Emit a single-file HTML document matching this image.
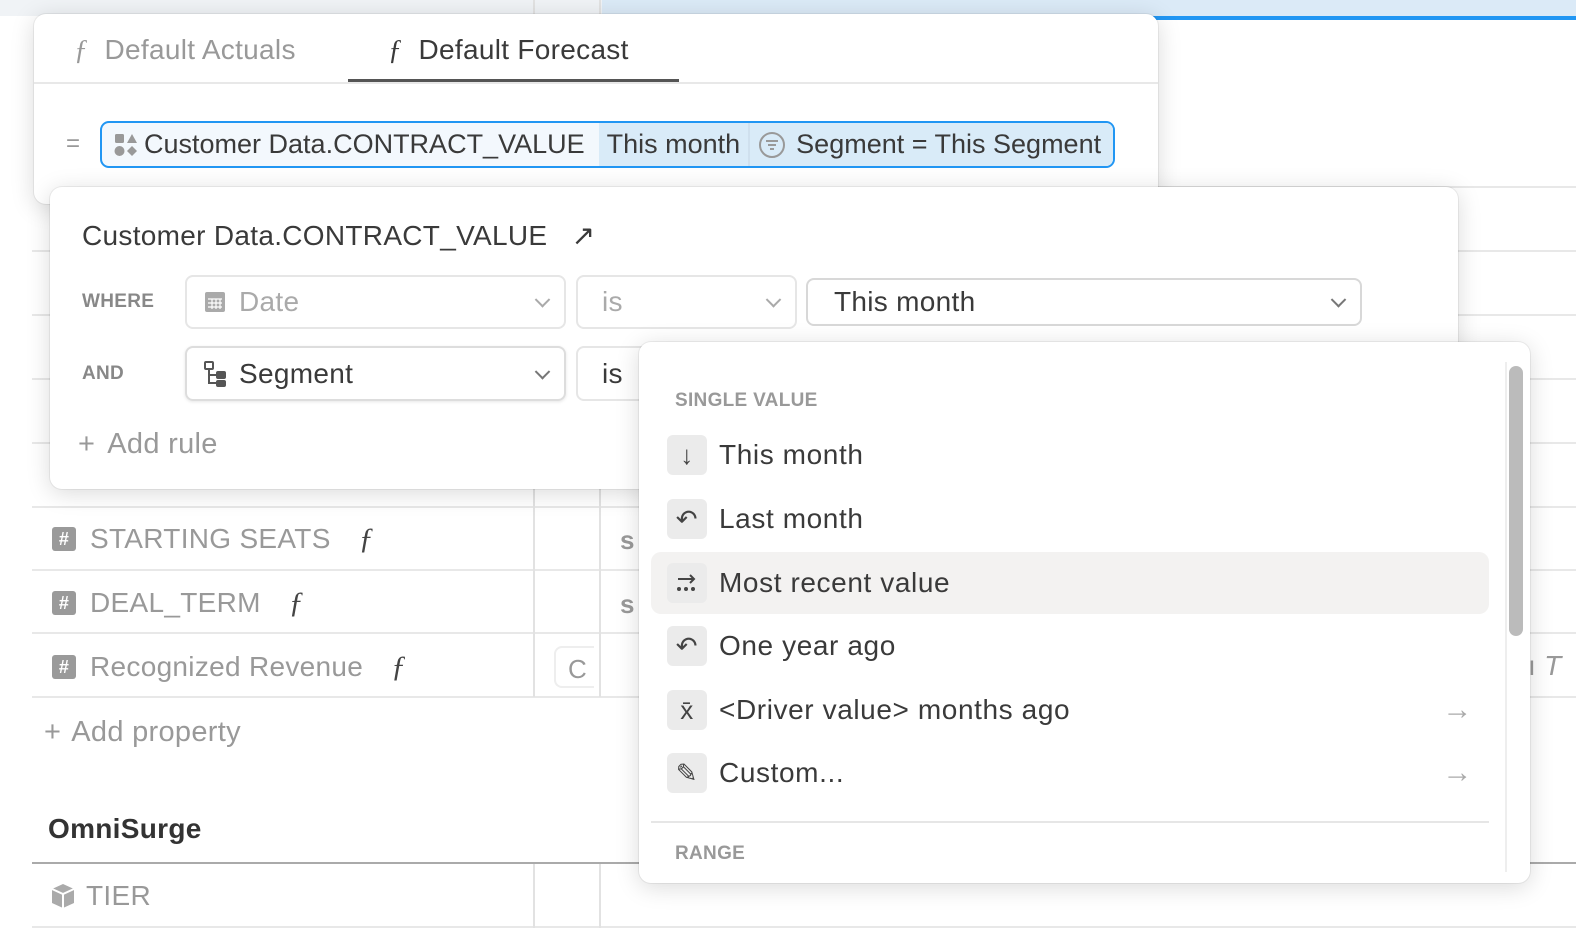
<!DOCTYPE html>
<html><head><meta charset="utf-8"><style>
*{box-sizing:border-box;margin:0;padding:0}
body{width:1576px;height:934px;overflow:hidden;background:#fff;font-family:"Liberation Sans",sans-serif;color:#444;position:relative;letter-spacing:.3px}
.abs{position:absolute}
.hl{position:absolute;height:2px;background:#e8e8e8}
.vl{position:absolute;width:2px;background:#e2e2e2}
.row{position:absolute;left:52px;font-size:28px;color:#999;display:flex;align-items:center}
.hash{width:24px;height:24px;background:#9a9a9a;border-radius:3px;color:#fff;font-size:18px;font-weight:bold;display:flex;align-items:center;justify-content:center;margin-right:14px}
.f{font-style:italic;color:#444;font-family:"Liberation Serif",serif;margin-left:28px;font-size:30px}
.card{position:absolute;background:#fff;border-radius:12px;box-shadow:0 4px 24px rgba(0,0,0,.15),0 0 0 1px rgba(0,0,0,.06)}
.sel{position:absolute;border:2px solid #e6e6e6;border-radius:8px;font-size:28px;display:flex;align-items:center;padding-left:16px}
.chev{position:absolute;right:16px;top:50%;width:11px;height:11px;border-right:2px solid #777;border-bottom:2px solid #777;transform:translateY(-70%) rotate(45deg)}
.item{position:absolute;left:12px;width:838px;height:62px;display:flex;align-items:center;font-size:28px;color:#3a3a3a;border-radius:10px;letter-spacing:.6px}
.ic{width:40px;height:40px;background:#ebebeb;border-radius:6px;margin:0 12px 0 16px;display:flex;align-items:center;justify-content:center;font-size:26px;color:#444}
.arr{position:absolute;right:16px;color:#aaa;font-size:30px}
</style></head><body>
<div class="abs" style="left:0;top:0;width:1576px;height:16px;background:#f0f3f6"></div>
<div class="abs" style="left:602px;top:0;width:974px;height:20px;background:#dbeaf7;border-bottom:4px solid #2196f3"></div>
<div class="hl" style="left:1150px;top:186px;width:426px"></div>
<div class="hl" style="left:32px;top:250px;width:1544px"></div>
<div class="hl" style="left:32px;top:314px;width:1544px"></div>
<div class="hl" style="left:32px;top:378px;width:1544px"></div>
<div class="hl" style="left:32px;top:442px;width:1544px"></div>
<div class="hl" style="left:32px;top:506px;width:1544px"></div>
<div class="hl" style="left:32px;top:569px;width:1544px"></div>
<div class="hl" style="left:32px;top:632px;width:1544px"></div>
<div class="hl" style="left:32px;top:696px;width:1544px"></div>
<div class="hl" style="left:32px;top:862px;width:1544px;background:#aaa"></div>
<div class="hl" style="left:32px;top:926px;width:1544px"></div>
<div class="vl" style="left:533px;top:0;height:697px"></div>
<div class="vl" style="left:599px;top:0;height:697px"></div>
<div class="vl" style="left:533px;top:864px;height:64px"></div>
<div class="vl" style="left:599px;top:864px;height:64px"></div>
<div class="row" style="top:522px"><span class="hash">#</span>STARTING SEATS<span class="f">ƒ</span></div>
<div class="row" style="top:586px"><span class="hash">#</span>DEAL_TERM<span class="f">ƒ</span></div>
<div class="row" style="top:650px"><span class="hash">#</span>Recognized Revenue<span class="f">ƒ</span></div>
<div class="abs" style="left:620px;top:525px;font-size:26px;color:#999;font-weight:bold">s</div>
<div class="abs" style="left:620px;top:589px;font-size:26px;color:#999;font-weight:bold">s</div>
<div class="abs" style="left:554px;top:646px;width:40px;height:42px;border:2px solid #eee;border-right:none;border-radius:8px 0 0 8px;font-size:26px;color:#999;padding:6px 12px">C</div>
<div class="abs" style="left:1528px;top:650px;font-size:28px;color:#999">ı <i>T</i></div>
<div class="abs" style="left:44px;top:716px;font-size:29px;color:#999"><span style="margin-right:10px">+</span>Add property</div>
<div class="abs" style="left:48px;top:813px;font-size:28px;color:#333;font-weight:bold">OmniSurge</div>
<div class="abs" style="left:50px;top:880px;font-size:28px;color:#999;display:flex;align-items:center"><svg width="26" height="28" viewBox="0 0 26 28" style="margin-right:10px"><path d="M13 2l11 5v14l-11 5-11-5V7z" fill="#aaa"/><path d="M2 7l11 5 11-5M13 12v14" stroke="#fff" stroke-width="2" fill="none"/></svg>TIER</div>

<div class="card" style="left:34px;top:14px;width:1124px;height:190px">
 <div class="abs" style="left:40px;top:20px;font-size:28px;color:#999"><i style="font-family:'Liberation Serif',serif">ƒ</i>&nbsp; Default Actuals</div>
 <div class="abs" style="left:354px;top:20px;font-size:28px;color:#3a3a3a"><i style="font-family:'Liberation Serif',serif">ƒ</i>&nbsp; Default Forecast</div>
 <div class="abs" style="left:314px;top:65px;width:331px;height:4px;background:#555"></div>
 <div class="abs" style="left:0;top:68px;width:1124px;height:2px;background:#e8e8e8"></div>
 <div class="abs" style="left:32px;top:116px;font-size:24px;color:#999">=</div>
 <div class="abs" style="left:66px;top:107px;width:1015px;height:47px;border:2px solid #2196f3;border-radius:9px;background:#f3f8fd;overflow:hidden;display:flex;align-items:center;font-size:27px;color:#3a3a3a;letter-spacing:0;white-space:nowrap">
  <span style="padding-left:12px;display:inline-flex;align-items:center">
   <svg width="24" height="24" viewBox="0 0 24 24"><rect x="1" y="1" width="9" height="9" rx="1.5" fill="#999"/><path d="M18 1l5 9h-10z" fill="#999"/><circle cx="5.5" cy="18" r="5" fill="#999"/><path d="M18 13l5 5-5 5-5-5z" fill="#999"/></svg>
   <span style="margin-left:6px">Customer Data.CONTRACT_VALUE</span></span>
  <span style="margin-left:14px;background:#d9ebf8;height:100%;display:inline-flex;align-items:center;padding:0 8px;border-right:2px solid #cfe0ee">This month</span>
  <span style="background:#d9ebf8;height:100%;flex:1;display:inline-flex;align-items:center;padding-left:8px">
   <svg width="28" height="28" viewBox="0 0 28 28"><circle cx="14" cy="14" r="12" fill="none" stroke="#999" stroke-width="2"/><path d="M8 10h12M10 14h8M12 18h4" stroke="#999" stroke-width="2"/></svg>
   <span style="margin-left:10px">Segment = This Segment</span></span>
 </div>
</div>

<div class="card" style="left:50px;top:187px;width:1408px;height:302px">
 <div class="abs" style="left:32px;top:32px;font-size:28px;color:#3a3a3a">Customer Data.CONTRACT_VALUE &nbsp; ↗</div>
 <div class="abs" style="left:32px;top:104px;font-size:19px;font-weight:bold;color:#888">WHERE</div>
 <div class="abs" style="left:32px;top:176px;font-size:19px;font-weight:bold;color:#888">AND</div>
 <div class="sel" style="left:135px;top:88px;width:381px;height:54px;color:#aaa"><svg width="24" height="24" viewBox="0 0 24 24" style="margin-right:12px"><rect x="2" y="2" width="20" height="20" rx="2" fill="#aaa"/><path d="M5 9h14M5 13h14M5 17h14M9 9v10M13 9v10M17 9v10" stroke="#fff" stroke-width="1.2"/></svg>Date<span class="chev" style="border-color:#aaa"></span></div>
 <div class="sel" style="left:526px;top:88px;width:221px;height:54px;color:#aaa;padding-left:24px">is<span class="chev" style="border-color:#aaa"></span></div>
 <div class="sel" style="left:756px;top:91px;width:556px;height:48px;color:#3a3a3a;border-color:#d8d8d8;padding-left:26px">This month<span class="chev"></span></div>
 <div class="sel" style="left:135px;top:159px;width:381px;height:55px;color:#3a3a3a;border-color:#ddd;box-shadow:0 1px 3px rgba(0,0,0,.1)"><svg width="26" height="28" viewBox="0 0 26 28" style="margin-right:10px"><rect x="2" y="2" width="8" height="7" rx="1" fill="none" stroke="#555" stroke-width="2"/><path d="M6 9v14h8M6 15h8" stroke="#555" stroke-width="2" fill="none"/><rect x="13" y="11" width="10" height="8" rx="2" fill="#555"/><rect x="13" y="20" width="10" height="7" rx="2" fill="#555"/></svg>Segment<span class="chev"></span></div>
 <div class="sel" style="left:526px;top:159px;width:221px;height:55px;color:#3a3a3a;padding-left:24px">is</div>
 <div class="abs" style="left:28px;top:241px;font-size:29px;color:#999"><span style="margin-right:12px">+</span>Add rule</div>
</div>

<div class="card" style="left:639px;top:342px;width:891px;height:541px;overflow:hidden">
 <div class="abs" style="left:36px;top:48px;font-size:19px;font-weight:bold;color:#999">SINGLE VALUE</div>
 <div class="item" style="top:82px"><span class="ic">↓</span>This month</div>
 <div class="item" style="top:146px"><span class="ic">↶</span>Last month</div>
 <div class="item" style="top:210px;background:#f3f2f1"><span class="ic"><svg width="24" height="22" viewBox="0 0 24 22"><path d="M3 7h16M15 3l4 4-4 4" stroke="#444" stroke-width="2" fill="none"/><circle cx="4" cy="17" r="2" fill="#444"/><circle cx="11" cy="17" r="2" fill="#444"/><circle cx="18" cy="17" r="2" fill="#444"/></svg></span>Most recent value</div>
 <div class="item" style="top:273px"><span class="ic">↶</span>One year ago</div>
 <div class="item" style="top:337px"><span class="ic" style="font-size:26px">x̄</span>&lt;Driver value&gt; months ago<span class="arr">→</span></div>
 <div class="item" style="top:400px"><span class="ic">✎</span>Custom...<span class="arr">→</span></div>
 <div class="abs" style="left:12px;top:479px;width:838px;height:2px;background:#e6e6e6"></div>
 <div class="abs" style="left:36px;top:501px;font-size:19px;font-weight:bold;color:#999">RANGE</div>
 <div class="abs" style="left:866px;top:20px;width:2px;height:510px;background:#eee"></div>
 <div class="abs" style="left:870px;top:24px;width:14px;height:270px;background:#bbb;border-radius:7px"></div>
</div>
</body></html>
